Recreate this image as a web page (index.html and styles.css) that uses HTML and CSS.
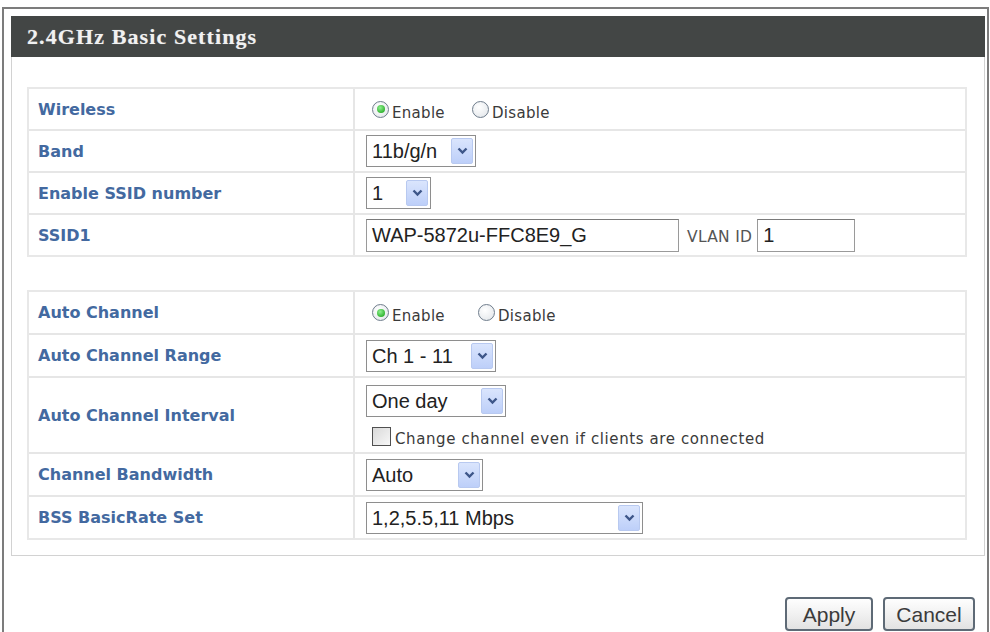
FILE: index.html
```html
<!DOCTYPE html>
<html>
<head>
<meta charset="utf-8">
<title>2.4GHz Basic Settings</title>
<link rel="stylesheet" href="styles.css">
</head>
<body>
<div class="frame">
  <div class="title">2.4GHz Basic Settings</div>
  <div class="panel">
    <table class="grid">
      <colgroup><col class="c-label"><col></colgroup>
      <tr>
        <td class="lbl">Wireless</td>
        <td class="val">
          <span class="opt"><span class="radio on"></span><span class="opt-text">Enable</span></span>
          <span class="opt gap-a"><span class="radio"></span><span class="opt-text">Disable</span></span>
        </td>
      </tr>
      <tr>
        <td class="lbl">Band</td>
        <td class="val"><span class="sel w-band"><span class="sel-text">11b/g/n</span><span class="sel-btn"><svg width="11" height="8" viewBox="0 0 11 8"><polyline points="1.5,1.5 5.5,5.5 9.5,1.5" fill="none" stroke="#3d5689" stroke-width="2.4"/></svg></span></span></td>
      </tr>
      <tr>
        <td class="lbl">Enable SSID number</td>
        <td class="val"><span class="sel w-num"><span class="sel-text">1</span><span class="sel-btn"><svg width="11" height="8" viewBox="0 0 11 8"><polyline points="1.5,1.5 5.5,5.5 9.5,1.5" fill="none" stroke="#3d5689" stroke-width="2.4"/></svg></span></span></td>
      </tr>
      <tr class="last">
        <td class="lbl">SSID1</td>
        <td class="val">
          <span class="ssid-line">
            <span class="field w-ssid">WAP-5872u-FFC8E9_G</span>
            <span class="vlan">VLAN ID</span>
            <span class="field w-vlan">1</span>
          </span>
        </td>
      </tr>
    </table>

    <table class="grid second">
      <colgroup><col class="c-label"><col></colgroup>
      <tr>
        <td class="lbl">Auto Channel</td>
        <td class="val">
          <span class="opt"><span class="radio on"></span><span class="opt-text">Enable</span></span>
          <span class="opt gap-b"><span class="radio"></span><span class="opt-text">Disable</span></span>
        </td>
      </tr>
      <tr>
        <td class="lbl">Auto Channel Range</td>
        <td class="val"><span class="sel w-range"><span class="sel-text">Ch 1 - 11</span><span class="sel-btn"><svg width="11" height="8" viewBox="0 0 11 8"><polyline points="1.5,1.5 5.5,5.5 9.5,1.5" fill="none" stroke="#3d5689" stroke-width="2.4"/></svg></span></span></td>
      </tr>
      <tr class="tall">
        <td class="lbl">Auto Channel Interval</td>
        <td class="val">
          <div class="stack">
            <span class="sel w-day"><span class="sel-text">One day</span><span class="sel-btn"><svg width="11" height="8" viewBox="0 0 11 8"><polyline points="1.5,1.5 5.5,5.5 9.5,1.5" fill="none" stroke="#3d5689" stroke-width="2.4"/></svg></span></span>
            <span class="check-line"><span class="check"></span><span class="check-text">Change channel even if clients are connected</span></span>
          </div>
        </td>
      </tr>
      <tr>
        <td class="lbl">Channel Bandwidth</td>
        <td class="val"><span class="sel w-auto"><span class="sel-text">Auto</span><span class="sel-btn"><svg width="11" height="8" viewBox="0 0 11 8"><polyline points="1.5,1.5 5.5,5.5 9.5,1.5" fill="none" stroke="#3d5689" stroke-width="2.4"/></svg></span></span></td>
      </tr>
      <tr class="last">
        <td class="lbl">BSS BasicRate Set</td>
        <td class="val"><span class="sel w-rate"><span class="sel-text">1,2,5.5,11 Mbps</span><span class="sel-btn"><svg width="11" height="8" viewBox="0 0 11 8"><polyline points="1.5,1.5 5.5,5.5 9.5,1.5" fill="none" stroke="#3d5689" stroke-width="2.4"/></svg></span></span></td>
      </tr>
    </table>
  </div>
  <div class="actions">
    <span class="btn w-apply">Apply</span>
    <span class="btn w-cancel">Cancel</span>
  </div>
</div>
</body>
</html>
```
FILE: styles.css
```css
* { box-sizing: border-box; }
html, body { margin: 0; padding: 0; background: #ffffff; }
body { font-family: "DejaVu Sans", sans-serif; overflow: hidden; height: 632px; }

.frame {
  margin: 7px 0 0 2px;
  width: 987px;
  height: 640px;
  border: 2px solid #7c7c7c;
  border-bottom: none;
  padding: 7px 2px 0 7px;
}

.title {
  height: 41px;
  background: #434645;
  color: #f1f1f1;
  font-family: "Liberation Serif", "Times New Roman", serif;
  font-weight: bold;
  font-size: 22px;
  letter-spacing: 1.1px;
  line-height: 42px;
  padding-left: 16px;
  text-shadow: 0 0 1px rgba(255,255,255,0.4);
}

.panel {
  border: 1px solid #d2d2d2;
  border-top: none;
  padding: 30px 17px 15px 15px;
}

.grid {
  width: 100%;
  table-layout: fixed;
  border-collapse: separate;
  border-spacing: 0;
  border: 2px solid #e8e8e8;
}
.grid.second { margin-top: 33px; }
.c-label { width: 326px; }

.grid td {
  height: 42px;
  border-bottom: 2px solid #e6e6e6;
  vertical-align: middle;
  padding: 0;
}
.grid.second td { height: 43px; }
.grid tr.last td { border-bottom: none; height: 40px; }
.grid.second tr.last td { height: 41px; }
.grid tr.tall td { height: 76px; }

.lbl {
  border-right: 2px solid #e6e6e6;
  padding-left: 9px !important;
  color: #4369a0;
  font-weight: bold;
  font-size: 16px;
  white-space: nowrap;
}
.val {
  padding-left: 11px !important;
  color: #333;
}

/* radio options */
.opt { display: inline-flex; align-items: center; vertical-align: middle; }
.opt.gap-a { margin-left: 16px; }
.opt.gap-b { margin-left: 22px; }
.radio {
  width: 17px; height: 17px;
  border-radius: 50%;
  border: 1px solid #6f7d8c;
  background: radial-gradient(circle at 40% 35%, #ffffff 0%, #e9ecef 70%, #d2d6db 100%);
  margin-left: 6px;
  position: relative;
  flex: none;
}
.radio.on::after {
  content: "";
  position: absolute;
  left: 3.5px; top: 3.5px;
  width: 8px; height: 8px;
  border-radius: 50%;
  background: radial-gradient(circle at 40% 35%, #8ef08e 0%, #2fb12f 75%, #1f8f1f 100%);
}
.opt-text {
  font-size: 15px;
  letter-spacing: 0.3px;
  color: #3a3a3a;
  padding-top: 7px;
  margin-left: 3px;
}

/* select look-alike */
.sel {
  display: inline-flex;
  align-items: stretch;
  vertical-align: middle;
  height: 32px;
  border: 1px solid #8e8e8e;
  background: #fff;
  padding: 2px;
}
.sel-text {
  flex: 1;
  font-family: "Liberation Sans", Arial, sans-serif;
  font-size: 20px;
  color: #222;
  line-height: 26px;
  padding-left: 3px;
  white-space: nowrap;
}
.sel-btn {
  width: 22px;
  flex: none;
  display: flex;
  align-items: center;
  justify-content: center;
  background: linear-gradient(#dae5fd, #bdcff9);
  border: 1px solid #b8c9f0;
  border-radius: 2px;
}
.w-band { width: 110px; }
.w-num { width: 65px; }
.w-range { width: 130px; }
.w-day { width: 140px; }
.w-auto { width: 117px; }
.w-rate { width: 277px; }

/* text fields */
.ssid-line { display: flex; align-items: center; }
.field {
  display: inline-block;
  height: 33px;
  border: 1px solid #9a9a9a;
  border-top-color: #7a7a7a;
  font-family: "Liberation Sans", Arial, sans-serif;
  font-size: 20px;
  color: #222;
  line-height: 31px;
  padding-left: 5px;
  white-space: nowrap;
}
.w-ssid { width: 313px; }
.w-vlan { width: 98px; }
.vlan {
  font-size: 15.5px;
  letter-spacing: 0.3px;
  color: #555;
  margin: 4px 5px 0 8px;
}

/* checkbox row */
.stack { display: flex; flex-direction: column; align-items: flex-start; gap: 9px; padding-top: 2px; }
.check-line { display: flex; align-items: center; }
.check {
  width: 19px; height: 19px;
  border: 1px solid #505050;
  background: linear-gradient(135deg, #d9d9d9, #f7f7f7);
  margin-left: 6px;
  flex: none;
}
.check-text {
  font-size: 15px;
  letter-spacing: 0.6px;
  color: #3a3a3a;
  margin-left: 4px;
  padding-top: 4px;
}

/* buttons */
.actions {
  display: flex;
  justify-content: flex-end;
  gap: 10px;
  margin-top: 41px;
  padding-right: 10px;
}
.btn {
  display: inline-flex;
  align-items: center;
  justify-content: center;
  height: 34px;
  border: 2px solid #5e6a76;
  border-radius: 4px;
  background: linear-gradient(#fefefe, #f1f1f1 50%, #e2e2e2);
  font-family: "Liberation Sans", Arial, sans-serif;
  font-size: 21px;
  color: #3b3b3b;
  padding-top: 2px;
}
.w-apply { width: 88px; }
.w-cancel { width: 92px; }
```
